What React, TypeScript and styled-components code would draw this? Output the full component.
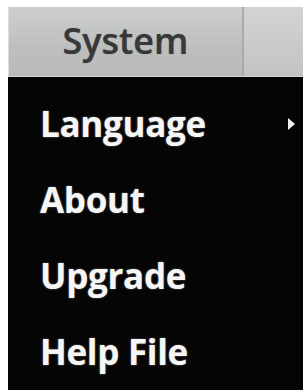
import styled, { createGlobalStyle } from "styled-components";

const GlobalStyle = createGlobalStyle`
  html, body {
    margin: 0;
    padding: 0;
    background: #ffffff;
    font-family: "Open Sans", "Liberation Sans", sans-serif;
  }
`;

const StyledFrame = styled.div`
  width: 295px;
  height: 390px;
  margin-left: 8px;
  padding-top: 7px;
  box-sizing: border-box;
  display: flex;
  flex-direction: column;
`;

const StyledMenuBar = styled.div`
  height: 71px;
  display: grid;
  grid-template-columns: 235px 1fr;
  background: linear-gradient(#cdcfcf, #bdbfbf 60%, #b9bbbb);
  border-left: 1px solid #dcdcdc;
  border-bottom: 1px solid #d6d6d6;
`;

const StyledMenuTitle = styled.div`
  display: flex;
  align-items: center;
  justify-content: center;
  border-right: 2px solid #a9abab;
  font-size: 36px;
  font-weight: 600;
  color: #383838;
  text-shadow: 0 0 1px rgba(40, 40, 40, 0.6);
  padding-bottom: 2px;
`;

const StyledMenuFiller = styled.div`
  background: linear-gradient(#d2d3d3, #c2c4c4);
`;

const StyledDropdown = styled.div`
  flex: 1;
  background: #050505;
  padding-top: 9px;
  display: flex;
  flex-direction: column;
`;

const StyledItem = styled.div`
  height: 76px;
  line-height: 76px;
  padding-left: 32px;
  padding-right: 8px;
  display: flex;
  align-items: center;
  justify-content: space-between;
  font-size: 35px;
  font-weight: 700;
  letter-spacing: -0.3px;
  color: #f6f6f6;
  text-shadow: 0 0 2px rgba(255, 255, 255, 0.45);
`;

const StyledArrow = styled.svg`
  width: 7px;
  height: 12px;
  filter: blur(0.4px);
`;

const items = [
  { label: "Language", submenu: true },
  { label: "About" },
  { label: "Upgrade" },
  { label: "Help File" },
];

export default function App() {
  return (
    <>
      <GlobalStyle />
      <StyledFrame>
        <StyledMenuBar>
          <StyledMenuTitle>System</StyledMenuTitle>
          <StyledMenuFiller />
        </StyledMenuBar>
        <StyledDropdown>
          {items.map((item) => (
            <StyledItem key={item.label}>
              <span>{item.label}</span>
              {item.submenu ? (
                <StyledArrow viewBox="0 0 7 12">
                  <path d="M0 0 L7 6 L0 12 Z" fill="#f2f2f2" />
                </StyledArrow>
              ) : null}
            </StyledItem>
          ))}
        </StyledDropdown>
      </StyledFrame>
    </>
  );
}
